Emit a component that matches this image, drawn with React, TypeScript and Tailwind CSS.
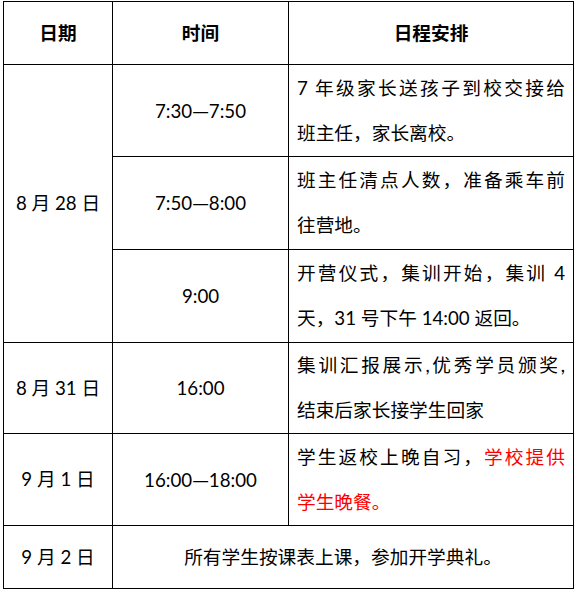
export default function App() {
  const font = { fontFamily: 'Lato, "Noto Sans CJK SC", sans-serif' };
  const cell = 'border border-black align-middle';
  const first = '[text-align:justify] [text-align-last:justify]';
  const dash = <span className="font-['Noto_Sans_CJK_SC',sans-serif]">—</span>;

  return (
    <div className="min-h-screen bg-white pt-px pl-[3px]" style={font}>
      <table className="table-fixed border-collapse text-[18.7px] text-black w-[570px]">
        <colgroup>
          <col className="w-[109px]" />
          <col className="w-[176px]" />
          <col className="w-[285px]" />
        </colgroup>
        <tbody>
          <tr className="h-[63px]">
            <th className={`${cell} text-center font-bold`}>日期</th>
            <th className={`${cell} text-center font-bold`}>时间</th>
            <th className={`${cell} text-center font-bold`}>日程安排</th>
          </tr>
          <tr className="h-[92px]">
            <td rowSpan={3} className={`${cell} text-center`}>8 月 28 日</td>
            <td className={`${cell} text-center`}>7:30{dash}7:50</td>
            <td className={`${cell} px-2 leading-[45px]`}>
              <div className={first}>7 年级家长送孩子到校交接给</div>
              <div>班主任，家长离校。</div>
            </td>
          </tr>
          <tr className="h-[93px]">
            <td className={`${cell} text-center`}>7:50{dash}8:00</td>
            <td className={`${cell} px-2 leading-[45px]`}>
              <div className={first}>班主任清点人数，准备乘车前</div>
              <div>往营地。</div>
            </td>
          </tr>
          <tr className="h-[93px]">
            <td className={`${cell} text-center`}>9:00</td>
            <td className={`${cell} px-2 leading-[45px]`}>
              <div className={first}>开营仪式，集训开始，集训 4</div>
              <div>天，31 号下午 14:00 返回。</div>
            </td>
          </tr>
          <tr className="h-[91px]">
            <td className={`${cell} text-center`}>8 月 31 日</td>
            <td className={`${cell} text-center`}>16:00</td>
            <td className={`${cell} px-2 leading-[45px]`}>
              <div className={first}>集训汇报展示,优秀学员颁奖,</div>
              <div>结束后家长接学生回家</div>
            </td>
          </tr>
          <tr className="h-[92px]">
            <td className={`${cell} text-center`}>9 月 1 日</td>
            <td className={`${cell} text-center`}>16:00{dash}18:00</td>
            <td className={`${cell} px-2 leading-[45px]`}>
              <div className={first}>
                学生返校上晚自习，<span className="text-[#ff0000]">学校提供</span>
              </div>
              <div className="text-[#ff0000]">学生晚餐。</div>
            </td>
          </tr>
          <tr className="h-[63px]">
            <td className={`${cell} text-center`}>9 月 2 日</td>
            <td colSpan={2} className={`${cell} text-center`}>
              所有学生按课表上课，参加开学典礼。
            </td>
          </tr>
        </tbody>
      </table>
    </div>
  );
}
